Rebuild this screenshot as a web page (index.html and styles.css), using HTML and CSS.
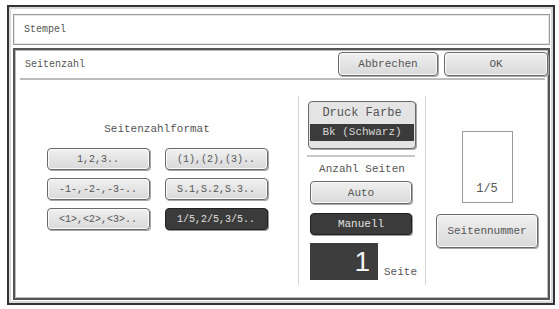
FILE: index.html
```html
<!DOCTYPE html>
<html>
<head>
<meta charset="utf-8">
<link rel="stylesheet" href="styles.css">
</head>
<body>
<div class="frame">
  <div class="title-box">Stempel</div>
  <div class="panel">
    <div class="header">
      <span class="header-title">Seitenzahl</span>
      <div class="header-buttons">
        <div class="btn btn-cancel">Abbrechen</div>
        <div class="btn btn-ok">OK</div>
      </div>
    </div>
    <div class="content">
      <div class="left">
        <div class="label">Seitenzahlformat</div>
        <div class="grid">
          <div class="btn fmt">1,2,3..</div>
          <div class="btn fmt">(1),(2),(3)..</div>
          <div class="btn fmt">-1-,-2-,-3-..</div>
          <div class="btn fmt">S.1,S.2,S.3..</div>
          <div class="btn fmt">&lt;1&gt;,&lt;2&gt;,&lt;3&gt;..</div>
          <div class="btn fmt dark">1/5,2/5,3/5..</div>
        </div>
      </div>
      <div class="mid">
        <div class="color-btn">
          <div class="color-label">Druck Farbe</div>
          <div class="color-value">Bk (Schwarz)</div>
        </div>
        <div class="sep"></div>
        <div class="label count-label">Anzahl Seiten</div>
        <div class="btn wide">Auto</div>
        <div class="btn wide dark">Manuell</div>
        <div class="num-row">
          <div class="num-box">1</div>
          <span class="num-unit">Seite</span>
        </div>
      </div>
      <div class="right">
        <div class="preview"><span>1/5</span></div>
        <div class="btn page-btn">Seitennummer</div>
      </div>
    </div>
  </div>
</div>
</body>
</html>
```

FILE: styles.css
```css
* { box-sizing: border-box; }
html, body { margin: 0; padding: 0; background: #fff; }
body {
  width: 559px;
  height: 309px;
  font-family: "Liberation Mono", "DejaVu Sans Mono", monospace;
  font-size: 11px;
  color: #555;
  overflow: hidden;
}
.frame {
  margin: 5px 0 0 7px;
  width: 548px;
  height: 300px;
  border: 2px solid #333;
  box-shadow: inset 0 0 0 2px #d8d8d8;
  padding: 7px 3px 3px 4px;
  display: flex;
  flex-direction: column;
  gap: 3px;
}
.title-box {
  height: 31px;
  flex: none;
  border: 1px solid #9a9a9a;
  box-shadow: inset 0 0 0 1px #e6e6e6;
  padding-left: 10px;
  line-height: 29px;
  font-size: 10px;
}
.panel {
  flex: 1;
  border: 2px solid #555;
  box-shadow: inset 1px 1px 0 #bbb, inset -1px -1px 0 #bbb;
  display: flex;
  flex-direction: column;
  padding: 0 0 0 1px;
}
.header {
  height: 30px;
  margin: 0 3px 0 4px;
  border-bottom: 2px solid #bdbdbd;
  display: flex;
  align-items: center;
  justify-content: space-between;
}
.header-title { padding-left: 5px; font-size: 10px; }
.header-buttons { display: flex; gap: 6px; margin-right: -3px; }
.btn {
  display: flex;
  align-items: center;
  justify-content: center;
  height: 23px;
  border: 1px solid #6a6a6a;
  border-radius: 4px;
  background: linear-gradient(#f0f0f0, #d9d9d9);
  box-shadow: 1px 1px 0 #a8a8a8, inset 0 0 0 1px #fafafa;
  color: #555;
  white-space: nowrap;
}
.btn.dark {
  background: #3b3b3b;
  border-color: #222;
  color: #e0e0e0;
  box-shadow: 1px 1px 0 #999;
}
.btn-cancel { width: 100px; height: 24px; }
.btn-ok { width: 104px; height: 24px; }
.content { flex: 1; display: flex; }
.left {
  width: 282px;
  padding-top: 43px;
  display: flex;
  flex-direction: column;
  align-items: center;
}
.label { line-height: 12px; text-align: center; }
.left .label { margin-bottom: 13px; }
.grid {
  display: grid;
  grid-template-columns: 103px 103px;
  grid-auto-rows: 22px;
  column-gap: 15px;
  row-gap: 8px;
}
.fmt { height: 22px; font-size: 10px; }
.mid {
  width: 128px;
  margin: 16px 0 13px;
  border-left: 1px solid #d4d4d4;
  border-right: 1px solid #d4d4d4;
  padding: 5px 0 0 9px;
  display: flex;
  flex-direction: column;
}
.color-btn {
  width: 108px;
  height: 48px;
  border: 1px solid #6a6a6a;
  border-radius: 4px;
  background: #e4e4e4;
  box-shadow: 1px 1px 0 #a8a8a8;
  padding: 0 1px;
}
.color-label { height: 22px; line-height: 22px; text-align: center; font-size: 12px; }
.color-value {
  height: 17px;
  line-height: 17px;
  background: #3b3b3b;
  color: #d8d8d8;
  text-align: center;
}
.sep {
  width: 108px;
  height: 2px;
  margin: 6px 0 6px -1px;
  background: #c8c8c8;
}
.count-label { width: 108px; margin-bottom: 6px; }
.wide { width: 102px; margin-left: 2px; }
.mid .dark { margin-top: 9px; height: 22px; }
.num-row {
  margin: 8px 0 0 2px;
  display: flex;
  align-items: flex-end;
  gap: 6px;
}
.num-box {
  width: 68px;
  height: 37px;
  background: #3d3d3d;
  color: #f4f4f4;
  font-family: "Liberation Sans", Arial, sans-serif;
  font-size: 28px;
  line-height: 37px;
  text-align: right;
  padding-right: 8px;
}
.num-unit { line-height: 12px; margin-bottom: 2px; }
.right {
  flex: 1;
  display: flex;
  flex-direction: column;
  align-items: center;
  padding-top: 51px;
}
.preview {
  width: 51px;
  height: 72px;
  border: 1px solid #999;
  display: flex;
  align-items: flex-end;
  justify-content: center;
  padding-bottom: 6px;
  font-size: 12px;
}
.page-btn { margin-top: 11px; width: 102px; height: 34px; }
```
